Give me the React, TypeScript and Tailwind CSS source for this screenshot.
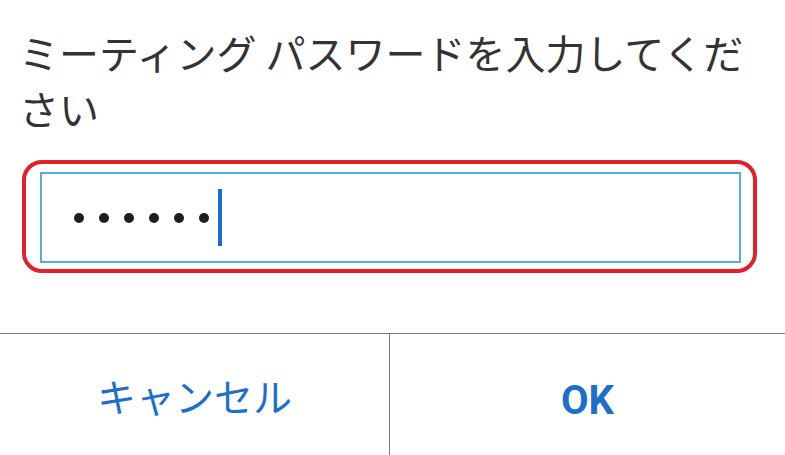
import React from "react";

const jp = { fontFamily: '"Noto Sans CJK JP", "Noto Sans", sans-serif' };

export default function App() {
  return (
    <div className="w-[785px] h-[455px] bg-white overflow-hidden flex flex-col" style={jp}>
      {/* Prompt */}
      <div className="pt-[24px] pl-[19px] pr-[20px] text-[40px] leading-[56px] text-[#333333]">
        ミーティング パスワードを入力してくだ
        <br />
        さい
      </div>

      {/* Highlighted password field */}
      <div className="mt-[24px] ml-[22px] w-[735px] h-[113px] border-[4px] border-[#e0202a] rounded-[20px] pl-[14px] pr-[12px] pt-[8px] pb-[6px]">
        <div className="h-full border-2 border-[#5aaadc] flex items-center pl-[32px]">
          <div className="flex items-center gap-[15px]">
            {[0, 1, 2, 3, 4, 5].map((i) => (
              <span key={i} className="w-[10px] h-[10px] rounded-full bg-[#1e1e1e]" />
            ))}
          </div>
          <span className="ml-[9px] w-[4px] h-[57px] bg-[#1a6dd0]" />
        </div>
      </div>

      {/* Buttons */}
      <div className="mt-[60px] flex-1 flex border-t border-[#7a7a7a]">
        <button className="w-[390px] border-r border-[#7a7a7a] flex items-center justify-center pt-[2px] text-[39px] text-[#1f6fc8]" style={jp}>
          キャンセル
        </button>
        <button
          className="flex-1 flex items-center justify-center pt-[12px] text-[40px] font-bold text-[#1f6fc8]"
          style={{ fontFamily: 'Roboto, "Noto Sans", sans-serif' }}
        >
          OK
        </button>
      </div>
    </div>
  );
}
